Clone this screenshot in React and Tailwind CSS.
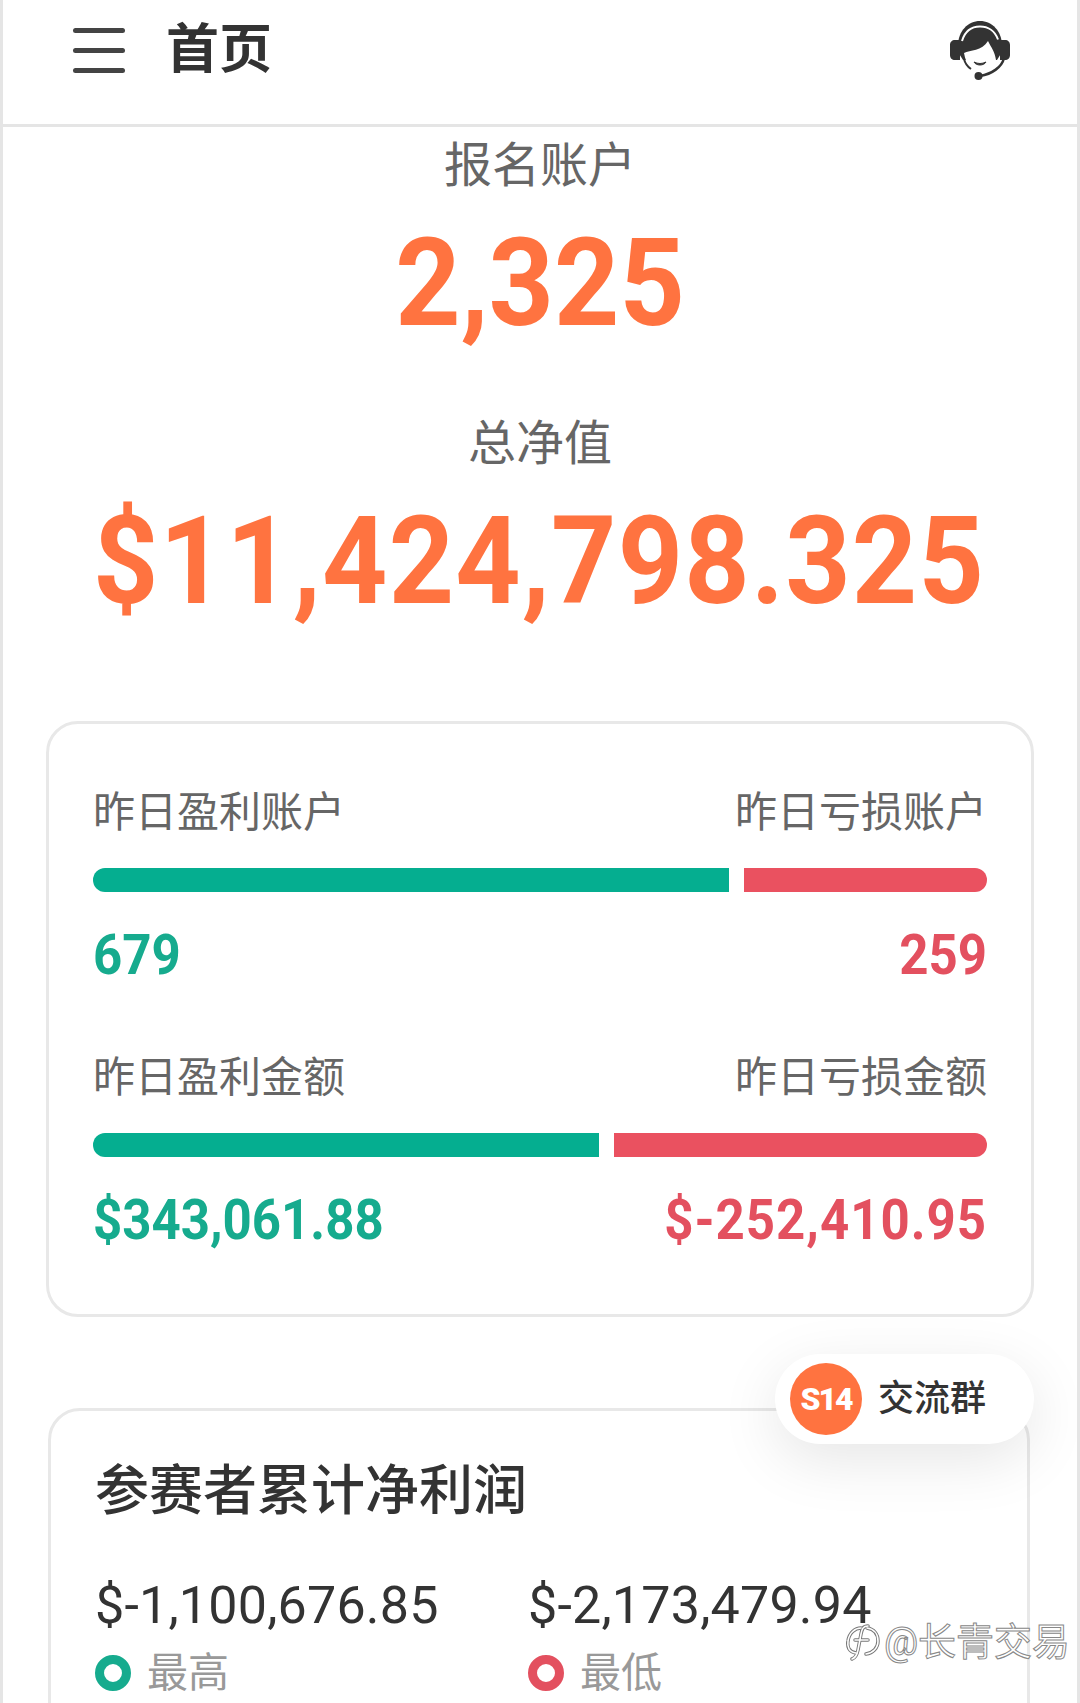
import React from 'react';

const cjk = "font-['Roboto','Noto_Sans_CJK_SC',sans-serif]";

function HeadsetIcon() {
  return (
    <svg viewBox="0 0 60 60" className="w-[60px] h-[60px]">
      <path d="M8 26C8 11 18 1 30 1s22 10 22 25v6l-5 8H13l-5-8z" fill="#333" />
      <path d="M0 25c0-3 2-5 5-5h5v20H5c-3 0-5-2-5-5zM60 25c0-3-2-5-5-5h-5v20h5c3 0 5-2 5-5z" fill="#333" />
      <path d="M12 21C15 11 22 6.5 30 6.5s15 4.5 18 13" fill="none" stroke="#fff" strokeWidth="2" />
      <path d="M14 33c6-3 18-2 24-12 3 6 7 11 8 19-2 7-8 11-16 11-8 0-14-6-16-18z" fill="#fff" />
      <path d="M14 39c1 4 4 8 7 10" fill="none" stroke="#333" strokeWidth="2" />
      <path d="M24 42c4 2 8 2 12 0-2 4-10 4-12 0z" fill="#333" stroke="#333" strokeWidth="1" />
      <path d="M54 38c-2 9-12 16-24 18" fill="none" stroke="#333" strokeWidth="2.5" />
      <circle cx="28.5" cy="56" r="4" fill="#333" />
    </svg>
  );
}

function ZhihuMark() {
  return (
    <svg viewBox="0 0 34 38" className="w-[34px] h-[38px]">
      <g fill="none" strokeLinecap="round">
        <g stroke="#777" strokeWidth="3.5">
          <path d="M10 30C3 29 1 24 2 18 3 10 9 5 15 5" />
          <path d="M21 5c7 1 11 6 11 13 0 7-5 12-12 13" />
          <path d="M22 3c-5 0-6 3-7 8l-3 16c-1 5-3 8-6 9" />
          <path d="M9 17h13" />
        </g>
        <g stroke="#fff" strokeWidth="1.6">
          <path d="M10 30C3 29 1 24 2 18 3 10 9 5 15 5" />
          <path d="M21 5c7 1 11 6 11 13 0 7-5 12-12 13" />
          <path d="M22 3c-5 0-6 3-7 8l-3 16c-1 5-3 8-6 9" />
          <path d="M9 17h13" />
        </g>
      </g>
    </svg>
  );
}

function SplitRow({ leftLabel, rightLabel, leftWidth, rightWidth, leftValue, rightValue, first }) {
  return (
    <div className={first ? '' : 'mt-[67px]'}>
      <div className="flex justify-between h-[50px] pt-[4px] items-center text-[42px] leading-none text-[#666]">
        <span>{leftLabel}</span>
        <span>{rightLabel}</span>
      </div>
      <div className="flex gap-[15px] mt-[32px] h-[24px]">
        <div className={`${leftWidth} bg-[#05ae90] rounded-l-full`} />
        <div className={`${rightWidth} bg-[#ea5160] rounded-r-full`} />
      </div>
      <div className="flex justify-between items-center h-[60px] mt-[32px] font-bold text-[51px] leading-none scale-y-[1.1]">
        <span className="text-[#16ab8e]">{leftValue}</span>
        <span className={first ? 'text-[#e3505f]' : 'text-[#e3505f] tracking-[1px]'}>{rightValue}</span>
      </div>
    </div>
  );
}

export default function App() {
  return (
    <div className={`${cjk} relative h-[1703px] w-[1080px] overflow-hidden bg-white border-x-[3px] border-[#e5e5e5]`}>
      <header className="flex items-center justify-between h-[127px] border-b-[3px] border-[#e5e5e5] pl-[70px] pr-[67px] pb-[24px]">
        <div className="flex items-center gap-[41px]">
          <div className="flex flex-col gap-[15px] w-[52px]">
            <div className="h-[5px] rounded-full bg-[#444]" />
            <div className="h-[5px] rounded-full bg-[#444]" />
            <div className="h-[5px] rounded-full bg-[#444]" />
          </div>
          <h1 className="text-[53px] leading-none font-bold text-[#333]">首页</h1>
        </div>
        <HeadsetIcon />
      </header>

      <div className="flex flex-col items-center">
        <div className="h-[74px] pt-[4px] flex items-center text-[48px] leading-none text-[#666]">报名账户</div>
        <div className="h-[120px] mt-[22px] flex items-center text-[114px] leading-none font-bold text-[#ff7340] scale-y-[1.07]">2,325</div>
        <div className="h-[74px] pt-[4px] mt-[62px] flex items-center text-[48px] leading-none text-[#666]">总净值</div>
        <div className="h-[120px] mt-[22px] mr-[2px] flex items-center text-[114px] leading-none font-bold text-[#ff7340] tracking-[1.2px] scale-y-[1.07]">$11,424,798.325</div>
      </div>

      <section className="mt-[100px] mx-[43px] border-[3px] border-[#e8e8e8] rounded-[32px] pt-[62px] pb-[65px] pl-[44px] pr-[44px]">
        <SplitRow
          first
          leftLabel="昨日盈利账户"
          rightLabel="昨日亏损账户"
          leftWidth="w-[636px]"
          rightWidth="w-[243px]"
          leftValue="679"
          rightValue="259"
        />
        <SplitRow
          leftLabel="昨日盈利金额"
          rightLabel="昨日亏损金额"
          leftWidth="w-[506px]"
          rightWidth="w-[373px]"
          leftValue="$343,061.88"
          rightValue="$-252,410.95"
        />
      </section>

      <section className="mt-[91px] ml-[45px] mr-[47px] border-[3px] border-[#e8e8e8] rounded-[32px] pt-[46px] pl-[44px] pb-[100px]">
        <h2 className="h-[70px] flex items-center text-[54px] leading-none font-medium text-[#333]">参赛者累计净利润</h2>
        <div className="flex mt-[54px]">
          <div className="w-[433px]">
            <div className="h-[50px] flex items-center text-[52px] leading-none tracking-[0.2px] text-[#333]">$-1,100,676.85</div>
            <div className="h-[50px] mt-[17px] flex items-center gap-[16px] text-[41px] leading-none text-[#999]">
              <span className="w-[36px] h-[36px] rounded-full border-[9px] border-[#16ab8e]" />
              最高
            </div>
          </div>
          <div>
            <div className="h-[50px] flex items-center text-[52px] leading-none tracking-[0.2px] text-[#333]">$-2,173,479.94</div>
            <div className="h-[50px] mt-[17px] flex items-center gap-[16px] text-[41px] leading-none text-[#999]">
              <span className="w-[36px] h-[36px] rounded-full border-[9px] border-[#e3505f]" />
              最低
            </div>
          </div>
        </div>
      </section>

      {/* floating group button */}
      <div className="absolute left-[772px] top-[1354px] w-[259px] h-[90px] rounded-full bg-white flex items-center pl-[15px] gap-[16px] shadow-[0_16px_60px_rgba(0,0,0,0.1)]">
        <div className="w-[72px] h-[72px] rounded-full bg-[#ff7340] flex items-center justify-center text-white font-black text-[32px] tracking-[-2px] leading-none">S14</div>
        <span className="text-[36px] leading-none font-medium text-[#333]">交流群</span>
      </div>

      {/* watermark */}
      <div className="absolute left-[843px] top-[1623px] flex items-center gap-[4px]">
        <ZhihuMark />
        <span className="text-[38px] leading-none text-white [-webkit-text-stroke:1px_#888]">@长青交易</span>
      </div>
    </div>
  );
}
